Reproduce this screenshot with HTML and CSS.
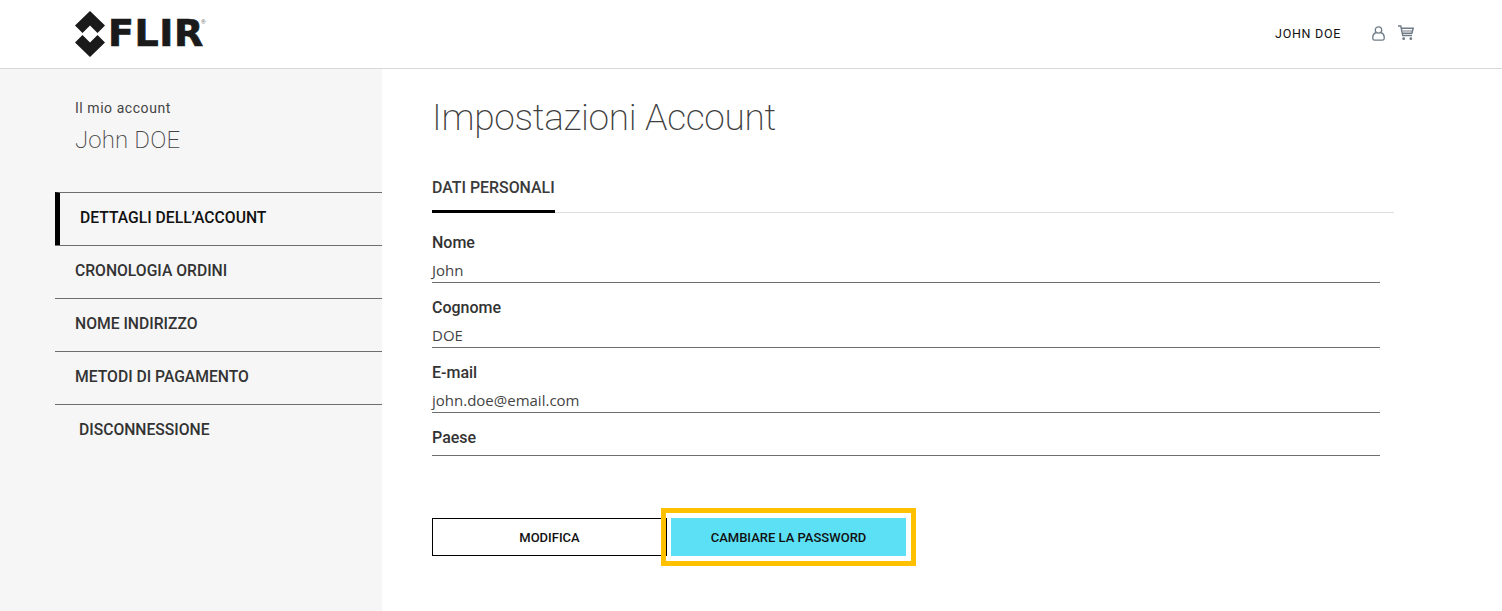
FILE: index.html
```html
<!DOCTYPE html>
<html lang="it">
<head>
<meta charset="utf-8">
<title>Impostazioni Account</title>
<link rel="stylesheet" href="styles.css">
</head>
<body>
<header class="topbar">
  <a class="logo">
    <svg class="logo-mark" width="32" height="46" viewBox="0 0 32 46"><path d="M16 0 31 14.5 23.5 22 16 14.5 8.5 22 1 14.5Z M1 31.5 8.5 24 16 31.5 23.5 24 31 31.5 16 46Z" fill="#1a1a1a"/></svg>
    <span class="logo-text">FLIR</span><span class="logo-reg">®</span>
  </a>
  <div class="top-actions">
    <span class="top-user">JOHN DOE</span>
    <svg class="icon icon-user" width="13" height="15" viewBox="0 0 13 15" fill="none" stroke="#6f7c88" stroke-width="1.3"><circle cx="6.5" cy="4" r="3.2"/><path d="M4 6.600C2 7.400.8 8.800.8 11v1.400c0 1 .7 1.800 1.800 1.800h7.800c1.100 0 1.800-.8 1.800-1.800V11C12.200 8.800 11 7.400 9 6.600"/></svg>
    <svg class="icon" width="16" height="16" viewBox="0 0 16 16" fill="none" stroke="#6f7b85" stroke-width="1.4"><path d="M0 1h2.800l1.900 9.500h9.300"/><path d="M3.200 3.300h12l-1.300 5H4.400"/><path d="M4.500 6h9.500" stroke-width="1"/><circle cx="5.700" cy="13.700" r="1.400" fill="#6f7b85" stroke="none"/><circle cx="12.800" cy="13.700" r="1.400" fill="#6f7b85" stroke="none"/></svg>
  </div>
</header>
<div class="layout">
  <aside class="sidebar">
    <div class="account-label">Il mio account</div>
    <div class="account-name">John DOE</div>
    <nav class="side-nav">
      <a class="side-item active">DETTAGLI DELL’ACCOUNT</a>
      <a class="side-item">CRONOLOGIA ORDINI</a>
      <a class="side-item">NOME INDIRIZZO</a>
      <a class="side-item">METODI DI PAGAMENTO</a>
      <a class="side-item logout">DISCONNESSIONE</a>
    </nav>
  </aside>
  <main class="content">
    <h1 class="title">Impostazioni Account</h1>
    <div class="tabs"><span class="tab">DATI PERSONALI</span></div>
    <div class="fields">
      <div class="field"><div class="field-label">Nome</div><div class="field-value">John</div></div>
      <div class="field"><div class="field-label">Cognome</div><div class="field-value">DOE</div></div>
      <div class="field"><div class="field-label">E-mail</div><div class="field-value">john.doe@email.com</div></div>
      <div class="field"><div class="field-label">Paese</div><div class="field-value empty"></div></div>
    </div>
    <div class="buttons">
      <button class="btn btn-outline">MODIFICA</button>
      <button class="btn btn-primary">CAMBIARE LA PASSWORD</button>
    </div>
  </main>
</div>
</body>
</html>
```
FILE: styles.css
```css
* { box-sizing: border-box; }
html, body { margin: 0; height: 100%; }
body { font-family: "Roboto", "Liberation Sans", sans-serif; color: #2b2b2b; background: #fff; overflow: hidden; }

.topbar { height: 69px; border-bottom: 1px solid #d9d9d9; display: flex; align-items: flex-start; justify-content: space-between; padding: 10px 88px 0 74px; }
.logo { display: flex; align-items: flex-start; }
.logo-mark { display: block; margin-top: 1px; }
.logo-text { font-family: "DejaVu Sans", sans-serif; font-weight: 700; font-size: 38px; line-height: 46px; color: #1a1a1a; margin-left: 2px; letter-spacing: 0.6px; -webkit-text-stroke: 0.7px #1a1a1a; }
.logo-reg { font-size: 6px; line-height: 8px; color: #777; margin-top: 8px; margin-left: -3px; }
.top-actions { display: flex; align-items: center; height: 46px; }
.top-user { font-size: 12.5px; color: #111; letter-spacing: 0.7px; margin-right: 31px; }
.icon { display: block; margin-right: 13px; }
.icon:last-child { margin-right: 0; }

.layout { display: flex; height: 542px; }
.sidebar { width: 382px; flex: none; background: #f6f6f6; padding: 30px 0 0 55px; }
.account-label { font-size: 14px; line-height: 18px; padding-left: 20px; color: #444; font-weight: 400; letter-spacing: 0.55px; }
.account-name { font-size: 24px; line-height: 30px; padding-left: 20px; margin-top: 8px; color: #444; font-weight: 200; letter-spacing: 0.15px; }
.side-nav { margin-top: 37px; }
.side-item { display: flex; align-items: center; height: 53px; border-top: 1px solid #6e6e6e; padding-left: 20px; padding-bottom: 3px; font-size: 15.7px; font-weight: 500; color: #333; }
.side-item.active { border-left: 5px solid #000; padding-left: 20px; color: #111; }
.side-item.logout { padding-left: 24px; }

.content { flex: 1; padding: 0 0 0 50px; }
.title { margin: 26px 0 0; font-size: 37px; line-height: 46px; font-weight: 200; color: #3f3f3f; letter-spacing: -0.3px; }
.tabs { width: 962px; height: 48px; margin-top: 24px; border-bottom: 1px solid #ddd; display: flex; }
.tab { height: 48px; display: flex; align-items: center; padding-bottom: 1px; border-bottom: 3px solid #000; font-size: 15.9px; font-weight: 500; color: #3a3a3a; }
.fields { width: 948px; margin-top: 18px; }
.field { margin-bottom: 13px; }
.field-label { font-size: 16px; line-height: 24px; font-weight: 500; color: #333; }
.field-value { font-family: "Open Sans", sans-serif; font-size: 15px; line-height: 22px; height: 28px; padding-top: 4px; color: #444; border-bottom: 1px solid #6e6e6e; }
.field-value.empty { height: 6px; padding: 0; }
.buttons { display: flex; margin-top: 62px; }
.btn { height: 38px; font-family: "Roboto", sans-serif; font-size: 13px; font-weight: 500; color: #111; border-radius: 0; }
.btn-outline { width: 235px; background: #fff; border: 1px solid #000; }
.btn-primary { width: 235px; margin-left: 4px; background: #5ce0f5; border: 0; outline: 5px solid #ffc000; outline-offset: 5px; }
```
